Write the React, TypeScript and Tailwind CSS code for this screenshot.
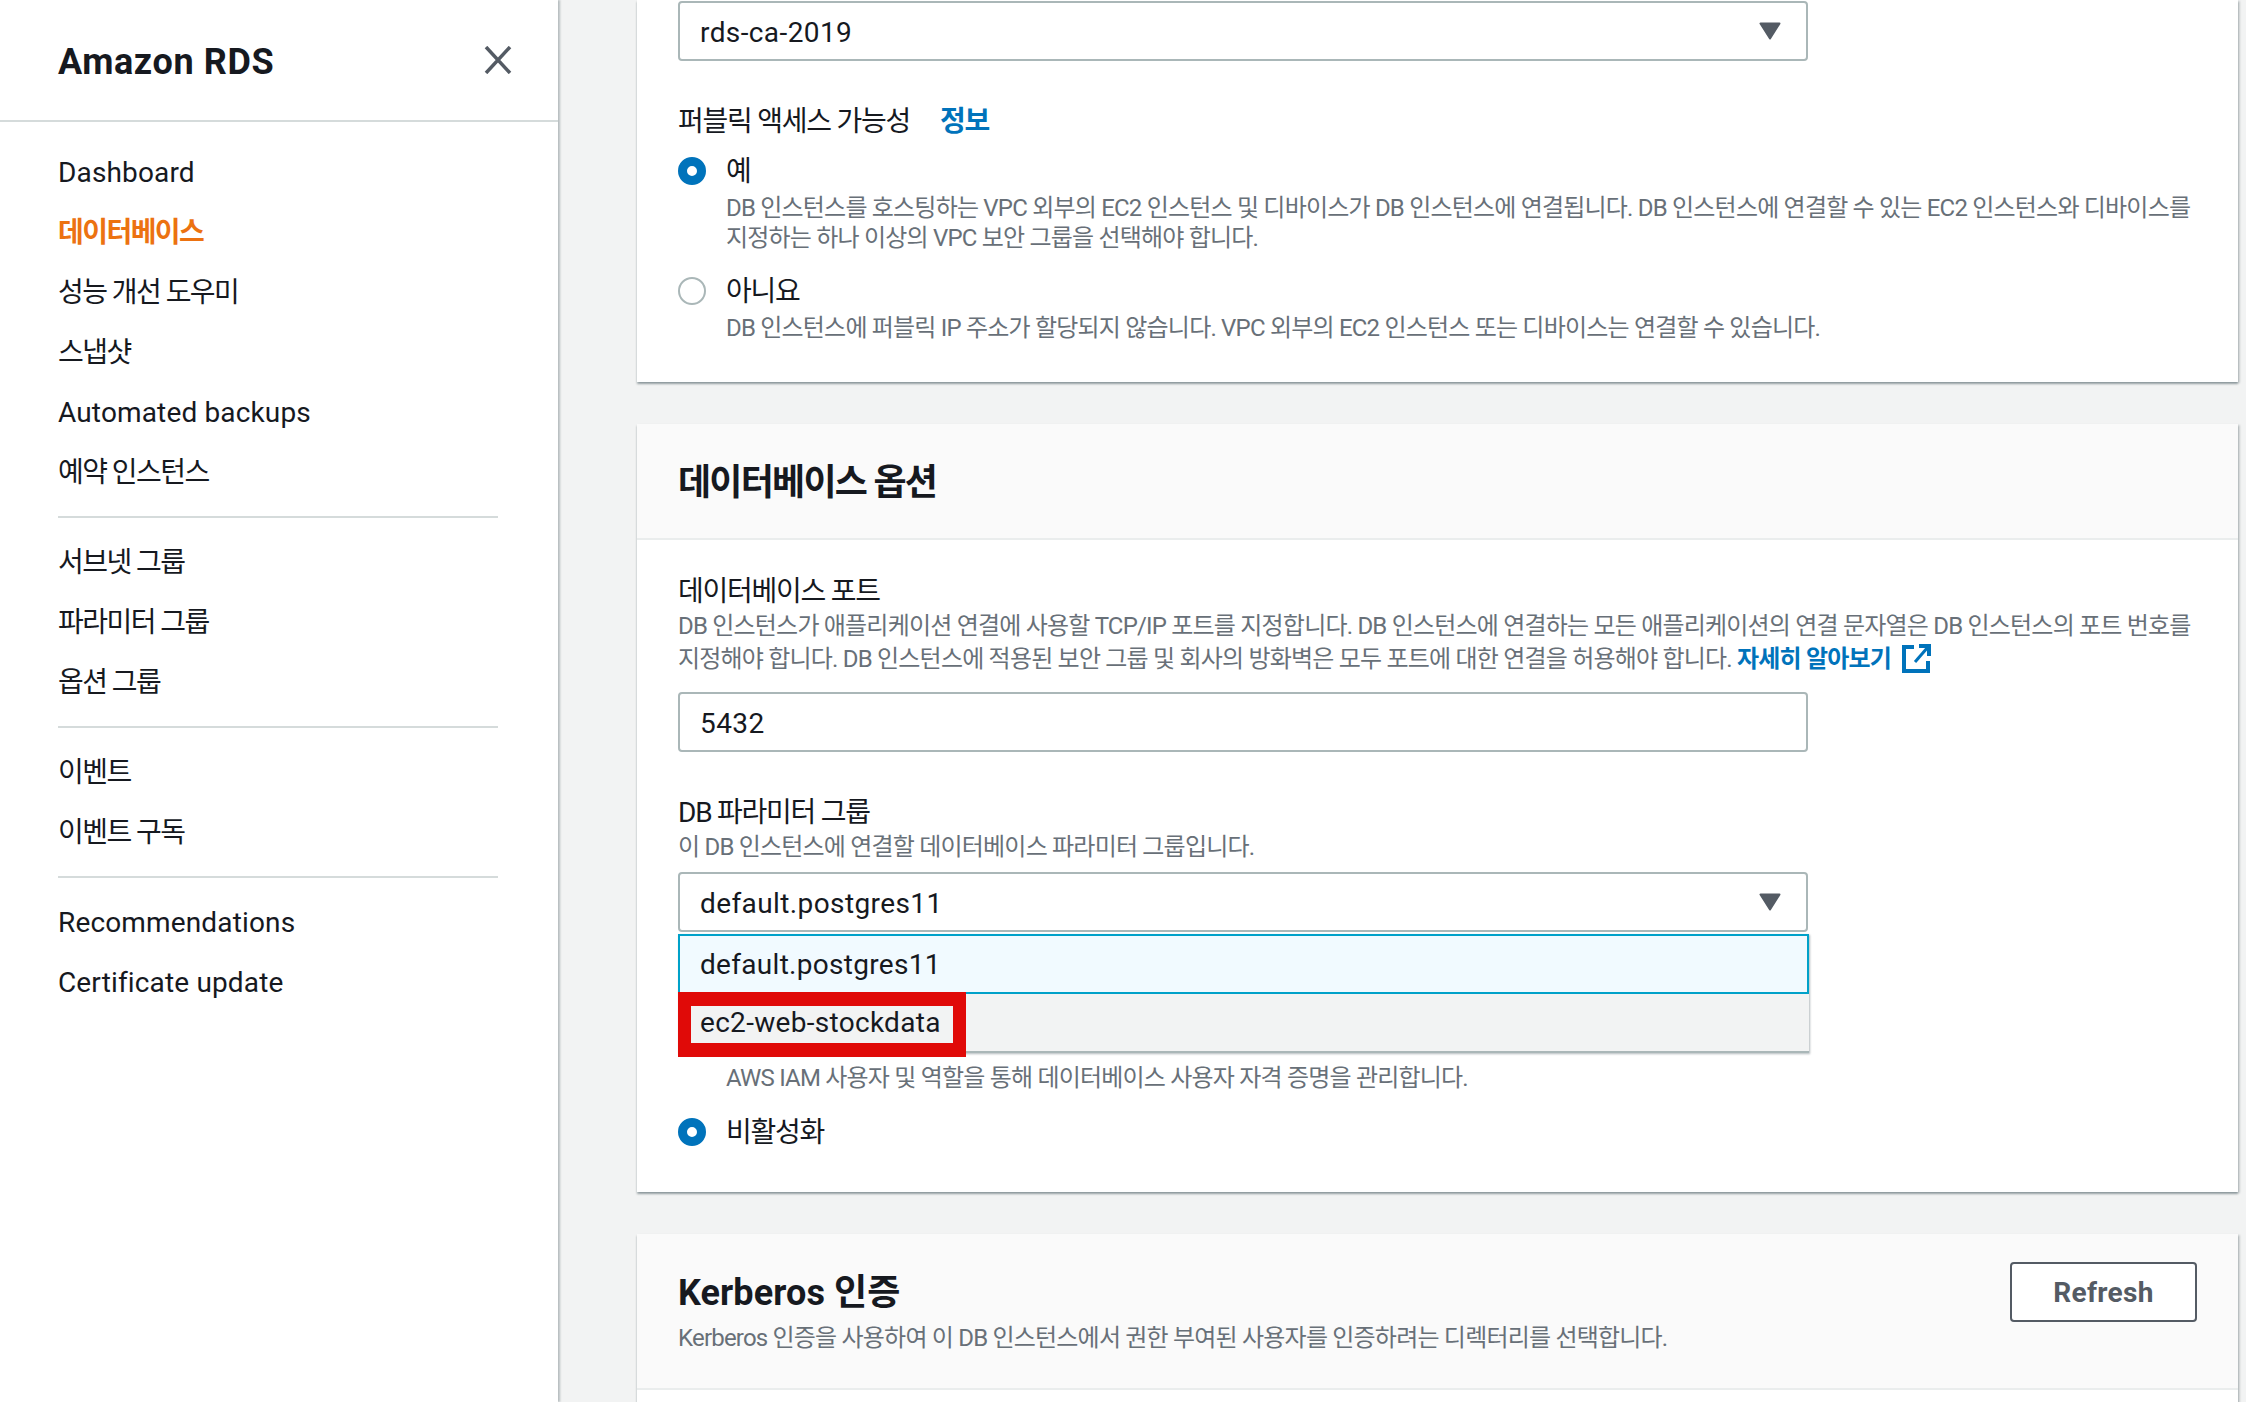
import React from 'react';

const navGroups = [
  ['Dashboard', '데이터베이스', '성능 개선 도우미', '스냅샷', 'Automated backups', '예약 인스턴스'],
  ['서브넷 그룹', '파라미터 그룹', '옵션 그룹'],
  ['이벤트', '이벤트 구독'],
  ['Recommendations', 'Certificate update'],
];

const latinItems = ['Dashboard', 'Automated backups', 'Recommendations', 'Certificate update'];

function Radio({ checked }: { checked?: boolean }) {
  return checked ? (
    <span className="size-[28px] shrink-0 rounded-full border-[9px] border-[#0073bb] bg-white" />
  ) : (
    <span className="size-[28px] shrink-0 rounded-full border-2 border-[#aab7b8] bg-white" />
  );
}

function Caret() {
  return (
    <svg width="22" height="18" viewBox="0 0 22 18" className="shrink-0">
      <path d="M1.5 1.5h19L11 16.5z" fill="#545b64" stroke="#545b64" strokeWidth="2" strokeLinejoin="round" />
    </svg>
  );
}

function SelectBox({ value }: { value: string }) {
  return (
    <div className="flex h-[60px] w-[1130px] items-center justify-between rounded-[4px] border-2 border-[#aab7b8] bg-white pl-[20px] pr-[25px] text-[28px] tracking-[0.4px] text-[#16191f]">
      <span className="pt-[3px]">{value}</span>
      <Caret />
    </div>
  );
}

function Desc({ children, className }: { children: React.ReactNode; className?: string }) {
  return <p className={`text-[24px] tracking-[-0.8px] text-[#687078] ${className ?? ''}`}>{children}</p>;
}

const panel = 'bg-white shadow-[0_2px_2px_0_rgba(0,28,36,0.35),2px_1px_2px_0_rgba(0,28,36,0.15)]';

export default function App() {
  return (
    <div className="flex h-[1402px] w-[2246px] overflow-hidden bg-[#f2f3f3] font-['Roboto','Noto_Sans_CJK_KR',sans-serif] text-[#16191f]">
      <aside className="h-full w-[558px] shrink-0 bg-white shadow-[2px_0_2px_0_rgba(0,28,36,0.25)]">
        <div className="flex h-[122px] items-center justify-between border-b-2 border-[#d5dbdb] pl-[58px] pr-[46px]">
          <h1 className="pt-[4px] text-[36px] font-bold tracking-[0.6px]">Amazon RDS</h1>
          <svg width="28" height="28" viewBox="0 0 28 28">
            <path d="M2 1l24 26M26 1L2 27" stroke="#545b64" strokeWidth="3.5" fill="none" />
          </svg>
        </div>
        <nav className="pl-[58px] pr-[60px] pt-[20px]">
          {navGroups.map((group, i) => (
            <div key={i} className={i > 0 ? 'mt-[14px] border-t-2 border-[#d5dbdb] pt-[14px]' : ''}>
              {group.map((item) => (
                <div
                  key={item}
                  className={`h-[60px] text-[28px] leading-[61px] ${latinItems.includes(item) ? 'tracking-[0.15px]' : 'tracking-[-1.55px]'} ${item === '데이터베이스' ? 'font-bold text-[#ec7211]' : ''}`}
                >
                  {item}
                </div>
              ))}
            </div>
          ))}
        </nav>
      </aside>

      <main className="min-w-0 flex-1 pl-[79px] pr-[8px]">
        <section className={`${panel} pb-[39px] pl-[41px] pt-[1px]`}>
          <SelectBox value="rds-ca-2019" />
          <div className="mt-[39px] flex h-[40px] items-center pt-[3px] text-[28px] tracking-[-1.25px]">
            퍼블릭 액세스 가능성
            <span className="ml-[30px] font-bold text-[#0073bb]">정보</span>
          </div>
          <div className="mt-[13px] flex h-[36px] items-center gap-[20px] text-[28px] tracking-[-1.25px]">
            <Radio checked />
            <span className="pt-[2px]">예</span>
          </div>
          <Desc className="mt-[4px] pl-[48px] leading-[30px]">
            DB 인스턴스를 호스팅하는 VPC 외부의 EC2 인스턴스 및 디바이스가 DB 인스턴스에 연결됩니다. DB 인스턴스에 연결할 수 있는 EC2 인스턴스와 디바이스를
            <br />
            지정하는 하나 이상의 VPC 보안 그룹을 선택해야 합니다.
          </Desc>
          <div className="mt-[20px] flex h-[36px] items-center gap-[20px] text-[28px] tracking-[-1.25px]">
            <Radio />
            <span className="pt-[2px]">아니요</span>
          </div>
          <Desc className="mt-[4px] pl-[48px] leading-[30px]">
            DB 인스턴스에 퍼블릭 IP 주소가 할당되지 않습니다. VPC 외부의 EC2 인스턴스 또는 디바이스는 연결할 수 있습니다.
          </Desc>
        </section>

        <section className={`${panel} mt-[42px]`}>
          <header className="flex h-[116px] items-center border-b-2 border-[#eaeded] bg-[#fafafa] pl-[41px] pt-[4px]">
            <h2 className="text-[36px] font-bold tracking-[-1.75px]">데이터베이스 옵션</h2>
          </header>
          <div className="pb-[42px] pl-[41px] pt-[30px]">
            <div className="h-[40px] text-[28px] leading-[43px] tracking-[-1.25px]">데이터베이스 포트</div>
            <Desc className="leading-[33px]">
              DB 인스턴스가 애플리케이션 연결에 사용할 TCP/IP 포트를 지정합니다. DB 인스턴스에 연결하는 모든 애플리케이션의 연결 문자열은 DB 인스턴스의 포트 번호를
              <br />
              지정해야 합니다. DB 인스턴스에 적용된 보안 그룹 및 회사의 방화벽은 모두 포트에 대한 연결을 허용해야 합니다.{' '}
              <span className="font-bold text-[#0073bb]">자세히 알아보기</span>
              <svg width="30" height="30" viewBox="0 0 30 30" className="ml-[10px] inline-block align-[-7px]">
                <path d="M13 3H3v24h24V17" fill="none" stroke="#0073bb" strokeWidth="4" />
                <path d="M18 2h10v10" fill="none" stroke="#0073bb" strokeWidth="4" />
                <path d="M27 3L14 18" fill="none" stroke="#0073bb" strokeWidth="3" />
              </svg>
            </Desc>
            <div className="mt-[16px] flex h-[60px] w-[1130px] items-center rounded-[4px] border-2 border-[#aab7b8] bg-white pl-[20px] pt-[3px] text-[28px] tracking-[0.4px]">
              5432
            </div>
            <div className="mt-[39px] h-[40px] text-[28px] leading-[43px] tracking-[-1.25px]">DB 파라미터 그룹</div>
            <Desc className="leading-[33px]">이 DB 인스턴스에 연결할 데이터베이스 파라미터 그룹입니다.</Desc>
            <div className="relative mt-[8px]">
              <SelectBox value="default.postgres11" />
              <div className="absolute left-0 top-[62px] z-10 w-[1131px] text-[28px] tracking-[0.3px] shadow-[1px_1px_2px_0_rgba(0,28,36,0.3)]">
                <div className="flex h-[60px] items-center border-2 border-[#00a1c9] bg-[#f1faff] pl-[20px] pt-[2px]">default.postgres11</div>
                <div className="flex h-[59px] items-center border-b-2 border-[#aab7b8] bg-[#f2f3f3] pl-[22px]">ec2-web-stockdata</div>
                <div className="absolute left-0 top-[58px] h-[65px] w-[288px] border-x-[13px] border-y-[14px] border-[#e00a08]" />
              </div>
            </div>
            <Desc className="mt-[129px] pl-[48px] leading-[34px]">AWS IAM 사용자 및 역할을 통해 데이터베이스 사용자 자격 증명을 관리합니다.</Desc>
            <div className="mt-[19px] flex h-[36px] items-center gap-[20px] text-[28px] tracking-[-1.25px]">
              <Radio checked />
              <span className="pt-[2px]">비활성화</span>
            </div>
          </div>
        </section>

        <section className={`${panel} mt-[42px] h-[400px]`}>
          <header className="flex h-[156px] justify-between border-b-2 border-[#eaeded] bg-[#fafafa] pl-[41px] pr-[41px]">
            <div className="pt-[37px]">
              <h2 className="h-[44px] text-[36px] font-bold leading-[44px] tracking-[0.1px]">Kerberos 인증</h2>
              <Desc className="mt-[7px] leading-[32px]">Kerberos 인증을 사용하여 이 DB 인스턴스에서 권한 부여된 사용자를 인증하려는 디렉터리를 선택합니다.</Desc>
            </div>
            <button className="mt-[28px] h-[60px] w-[187px] rounded-[4px] border-2 border-[#545b64] bg-white pt-[2px] text-[28px] font-bold tracking-[0.3px] text-[#545b64]">
              Refresh
            </button>
          </header>
        </section>
      </main>
    </div>
  );
}
